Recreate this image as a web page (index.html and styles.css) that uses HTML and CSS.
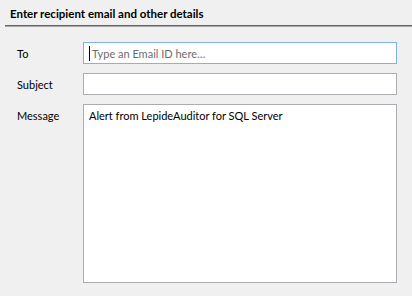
FILE: index.html
```html
<!DOCTYPE html>
<html lang="en">
<head>
  <meta charset="UTF-8" />
  <title>Recipient details</title>
  <link rel="stylesheet" href="styles.css">
</head>
<body>
  <div class="title">Enter recipient email and other details</div>
  <div class="rule"></div>

  <div class="form">
    <div class="row">
      <label class="label">To</label>
      <div class="field focused"><span class="caret"></span><span class="placeholder">Type an Email ID here…</span></div>
    </div>
    <div class="row">
      <label class="label">Subject</label>
      <div class="field"></div>
    </div>
    <div class="row">
      <label class="label">Message</label>
      <div class="field message">Alert from LepideAuditor for SQL Server</div>
    </div>
  </div>
</body>
</html>
```

FILE: styles.css
```css
body {
  margin: 0;
  background: #f0f0f0;
  font-family: Lato, "Open Sans", sans-serif;
  font-size: 11px;
  color: #000;
}
.title {
  padding: 6px 0 0 10px;
  height: 19px;
  font-size: 11.5px;
  font-weight: bold;
  line-height: 15px;
}
.rule {
  margin-left: 5px;
  border-top: 1px solid #666;
  border-bottom: 1px solid #a8a8a8;
}
.form {
  display: flex;
  flex-direction: column;
  gap: 9px;
  padding: 15px 0 0 17px;
}
.row {
  display: flex;
  align-items: flex-start;
}
.label {
  width: 66px;
  padding-top: 4px;
  line-height: 15px;
}
.field {
  display: flex;
  align-items: flex-start;
  box-sizing: border-box;
  width: 314px;
  height: 22px;
  padding: 3px 0 0 5px;
  background: #fff;
  border: 1px solid #abadb3;
  line-height: 15px;
}
.field.focused {
  border-color: #7eb4ea;
}
.field.message {
  height: 179px;
  padding-top: 3px;
}
.caret {
  display: inline-block;
  width: 1px;
  height: 15px;
  background: #000;
  margin: 0 2px 0 0;
}
.placeholder {
  color: #6d6d6d;
}
```
